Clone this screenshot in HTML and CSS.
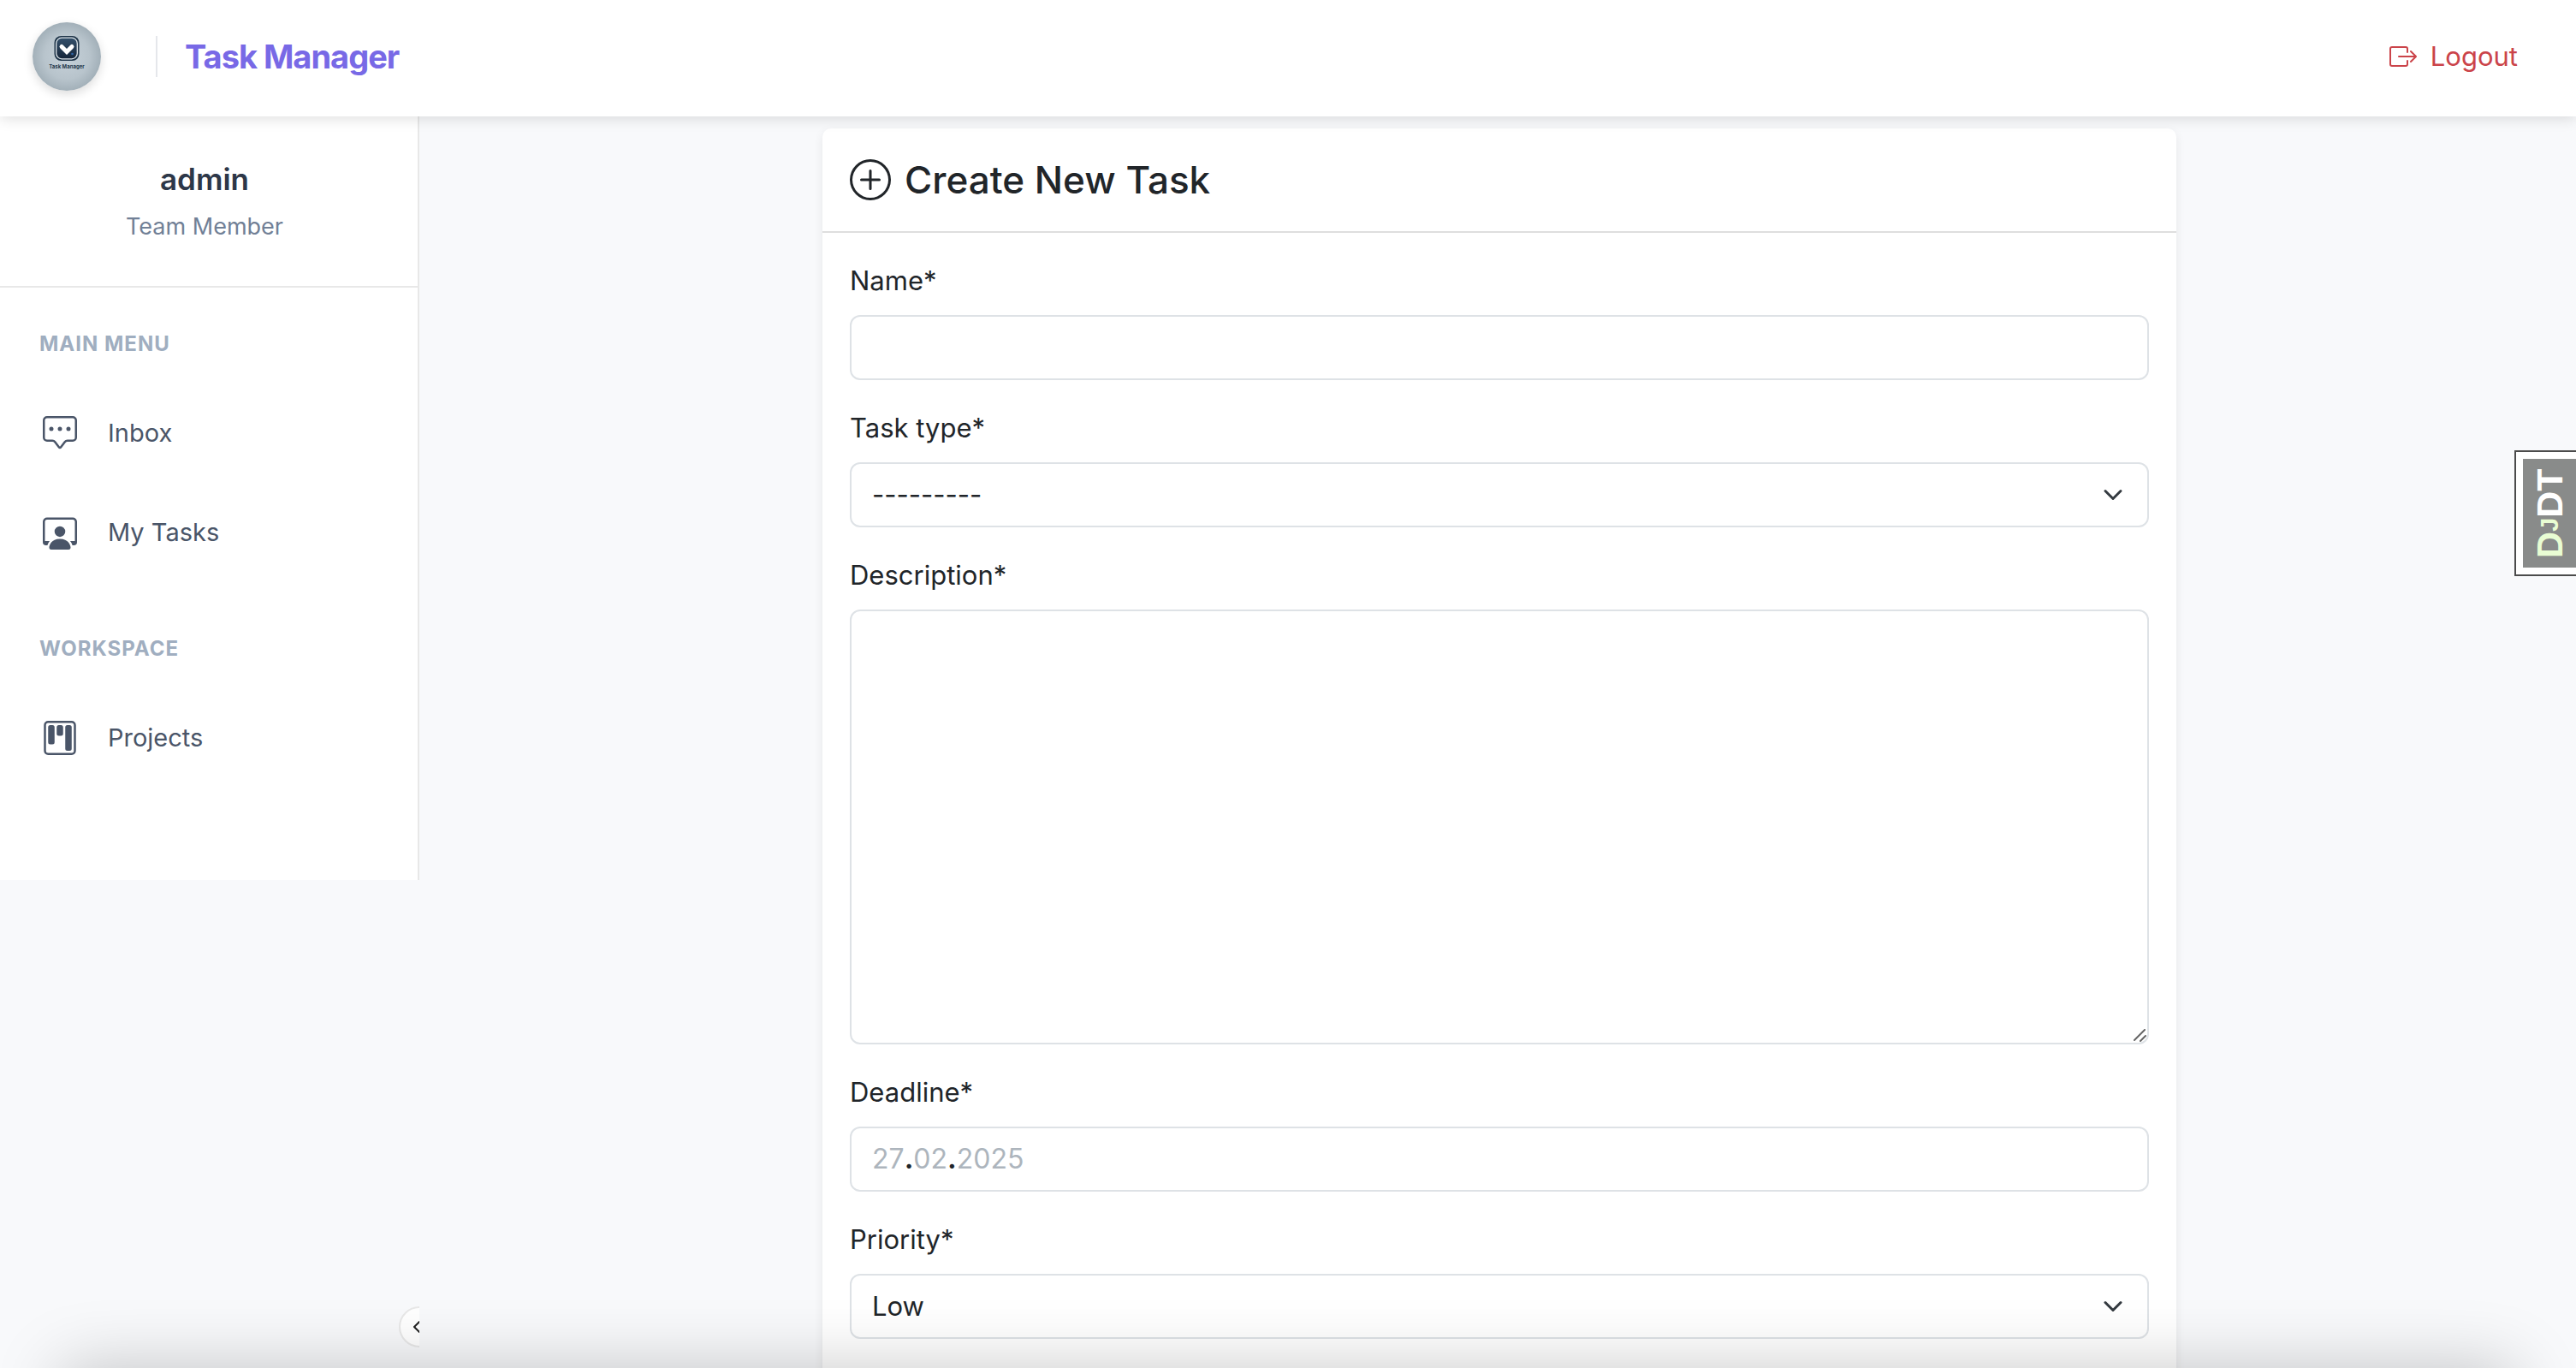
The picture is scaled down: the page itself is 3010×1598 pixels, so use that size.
FILE: index.html
```html
<!DOCTYPE html>
<html lang="en">
<head>
  <meta charset="utf-8">
  <title>Create New Task - Task Manager</title>
  <link rel="stylesheet" href="styles.css">
</head>
<body>
  <div class="app">
    <header class="topbar">
      <a class="logo" href="#" aria-label="Home">
        <svg viewBox="0 0 80 80" width="80" height="80" aria-hidden="true">
          <defs>
            <radialGradient id="disc" cx="50%" cy="50%" r="55%">
              <stop offset="0" stop-color="#c6d1d9"/>
              <stop offset="0.6" stop-color="#b8c4cc"/>
              <stop offset="1" stop-color="#9caab3"/>
            </radialGradient>
            <linearGradient id="tile" x1="0" y1="0" x2="0" y2="1">
              <stop offset="0" stop-color="#34506b"/>
              <stop offset="1" stop-color="#16263a"/>
            </linearGradient>
          </defs>
          <circle cx="40" cy="40" r="40" fill="url(#disc)"/>
          <rect x="25.5" y="16" width="29" height="29" rx="8" fill="#1f3549"/>
          <rect x="27.7" y="18.200" width="24.600" height="24.600" rx="6.500" fill="url(#tile)" stroke="#dfe6eb" stroke-width="1.300"/>
          <path d="M34 28.500l6 6 6-6" fill="none" stroke="#fff" stroke-width="5" stroke-linecap="round"/>
          <circle cx="46.500" cy="37" r="1.300" fill="#2f66a8"/>
          <text x="40" y="54" text-anchor="middle" class="logo-text">Task Manager</text>
        </svg>
      </a>
      <a class="brand" href="#">Task Manager</a>
      <a class="logout" href="#">
        <svg viewBox="0 0 16 16" width="32" height="32" fill="currentColor" aria-hidden="true">
          <path fill-rule="evenodd" d="M10 12.500a.5.5 0 0 1-.5.5h-8a.5.5 0 0 1-.5-.5v-9a.5.5 0 0 1 .5-.5h8a.5.5 0 0 1 .5.5v2a.5.5 0 0 0 1 0v-2A1.500 1.500 0 0 0 9.500 2h-8A1.500 1.500 0 0 0 0 3.500v9A1.500 1.500 0 0 0 1.500 14h8a1.500 1.500 0 0 0 1.500-1.500v-2a.5.5 0 0 0-1 0z"/>
          <path fill-rule="evenodd" d="M15.854 8.354a.5.5 0 0 0 0-.708l-3-3a.5.5 0 0 0-.708.708L14.293 7.500H5.500a.5.5 0 0 0 0 1h8.793l-2.147 2.146a.5.5 0 0 0 .708.708z"/>
        </svg>
        Logout
      </a>
    </header>

    <aside class="sidebar">
      <div class="profile">
        <p class="profile-name">admin</p>
        <p class="profile-role">Team Member</p>
      </div>
      <nav class="menu">
        <section>
          <h2 class="menu-title">Main Menu</h2>
          <ul class="menu-list">
            <li><a class="menu-link" href="#">
              <svg viewBox="0 0 16 16" width="40" height="40" fill="currentColor" aria-hidden="true">
                <path d="M14 1a1 1 0 0 1 1 1v8a1 1 0 0 1-1 1h-2.500a2 2 0 0 0-1.600.8L8 14.333 6.100 11.800a2 2 0 0 0-1.600-.8H2a1 1 0 0 1-1-1V2a1 1 0 0 1 1-1zM2 0a2 2 0 0 0-2 2v8a2 2 0 0 0 2 2h2.500a1 1 0 0 1 .8.4l1.900 2.533a1 1 0 0 0 1.600 0l1.900-2.533a1 1 0 0 1 .8-.4H14a2 2 0 0 0 2-2V2a2 2 0 0 0-2-2z"/>
                <path d="M5 6a1 1 0 1 1-2 0 1 1 0 0 1 2 0m4 0a1 1 0 1 1-2 0 1 1 0 0 1 2 0m4 0a1 1 0 1 1-2 0 1 1 0 0 1 2 0"/>
              </svg>
              Inbox</a></li>
            <li><a class="menu-link" href="#">
              <svg viewBox="0 0 16 16" width="40" height="40" fill="currentColor" aria-hidden="true">
                <path d="M4 16s-1 0-1-1 1-4 5-4 5 3 5 4-1 1-1 1zm4-5.950a2.500 2.500 0 1 0 0-5 2.500 2.500 0 0 0 0 5"/>
                <path d="M2 1a2 2 0 0 0-2 2v9.500A1.500 1.500 0 0 0 1.500 14h.653a5.400 5.400 0 0 1 1.066-2H1V3a1 1 0 0 1 1-1h12a1 1 0 0 1 1 1v9h-2.219c.554.654.89 1.373 1.066 2h.653a1.500 1.500 0 0 0 1.500-1.500V3a2 2 0 0 0-2-2z"/>
              </svg>
              My Tasks</a></li>
          </ul>
        </section>
        <section>
          <h2 class="menu-title">Workspace</h2>
          <ul class="menu-list">
            <li><a class="menu-link" href="#">
              <svg viewBox="0 0 16 16" width="40" height="40" fill="currentColor" aria-hidden="true">
                <path d="M13.500 1a1 1 0 0 1 1 1v12a1 1 0 0 1-1 1h-11a1 1 0 0 1-1-1V2a1 1 0 0 1 1-1zm-11-1a2 2 0 0 0-2 2v12a2 2 0 0 0 2 2h11a2 2 0 0 0 2-2V2a2 2 0 0 0-2-2z"/>
                <path d="M6.500 3a1 1 0 0 1 1-1h1a1 1 0 0 1 1 1v3a1 1 0 0 1-1 1h-1a1 1 0 0 1-1-1zm-4 0a1 1 0 0 1 1-1h1a1 1 0 0 1 1 1v7a1 1 0 0 1-1 1h-1a1 1 0 0 1-1-1zm8 0a1 1 0 0 1 1-1h1a1 1 0 0 1 1 1v10a1 1 0 0 1-1 1h-1a1 1 0 0 1-1-1z"/>
              </svg>
              Projects</a></li>
          </ul>
        </section>
      </nav>
    </aside>

    <main class="content">
      <form class="card">
        <h1 class="card-header">
          <svg viewBox="0 0 16 16" width="48" height="48" fill="currentColor" aria-hidden="true">
            <path d="M8 15A7 7 0 1 1 8 1a7 7 0 0 1 0 14m0 1A8 8 0 1 0 8 0a8 8 0 0 0 0 16"/>
            <path d="M8 4a.5.5 0 0 1 .5.5v3h3a.5.5 0 0 1 0 1h-3v3a.5.5 0 0 1-1 0v-3h-3a.5.5 0 0 1 0-1h3v-3A.5.5 0 0 1 8 4"/>
          </svg>
          Create New Task
        </h1>
        <div class="card-body">
          <div class="field">
            <label for="name">Name*</label>
            <input class="control" id="name" type="text">
          </div>
          <div class="field">
            <label for="type">Task type*</label>
            <select class="control select" id="type"><option>---------</option></select>
          </div>
          <div class="field">
            <label for="description">Description*</label>
            <div class="stack">
              <textarea class="control textarea" id="description"></textarea>
              <svg class="grip" viewBox="0 0 16 16" width="16" height="16" fill="none" stroke="#666" stroke-width="2" stroke-linecap="round" aria-hidden="true">
                <path d="M1 13L13 1M8 14l6-6"/>
              </svg>
            </div>
          </div>
          <div class="field">
            <label for="deadline">Deadline*</label>
            <div class="stack">
              <input class="control" id="deadline" type="text" inputmode="numeric">
              <span class="date-hint" aria-hidden="true">27<b>.</b>02<b>.</b>2025</span>
            </div>
          </div>
          <div class="field">
            <label for="priority">Priority*</label>
            <select class="control select" id="priority"><option>Low</option></select>
          </div>
        </div>
      </form>
    </main>
  </div>

  <div class="toggle-clip">
    <button class="toggle" type="button" aria-label="Collapse sidebar">
      <svg viewBox="0 0 16 16" width="16" height="16" fill="none" stroke="#222" stroke-width="2" stroke-linecap="round" stroke-linejoin="round" aria-hidden="true">
        <path d="M8 2L2 8l6 6"/>
      </svg>
    </button>
  </div>
  <button class="debug-handle" type="button"><span class="debug-text"><span class="debug-dj">D<small>J</small></span>DT</span></button>
  <div class="bottom-shade"></div>
</body>
</html>
```
FILE: styles.css
```css
* {
  box-sizing: border-box;
}

body {
  margin: 0;
  background: #f8f9fb;
  color: #212529;
  font: 400 31px/48px Inter, "Liberation Sans", sans-serif;
}

a {
  color: inherit;
  text-decoration: none;
}

svg {
  display: block;
  flex: none;
}

.app {
  display: grid;
  grid-template: auto 1fr / 490px 1fr;
  height: 100vh;
  overflow: hidden;
}

/* Top bar */
.topbar {
  grid-column: 1 / -1;
  z-index: 1;
  display: flex;
  align-items: center;
  padding: 26px 68px 30px 38px;
  background: #fff;
  box-shadow: 0 2px 16px rgba(0, 0, 0, 0.14);
}

.logo {
  border-radius: 50%;
  box-shadow: 0 4px 12px rgba(0, 0, 0, 0.14);
}

.logo-text {
  font: 700 6px Inter, sans-serif;
  fill: #24384c;
}

.brand {
  margin-left: 64px;
  padding-left: 32px;
  border-left: 2px solid #e5e7eb;
  color: #7869e6;
  font-size: 38px;
  font-weight: 700;
  letter-spacing: -1px;
}

.logout {
  display: flex;
  align-items: center;
  gap: 16px;
  margin-left: auto;
  color: #cb444a;
}

/* Sidebar */
.sidebar {
  align-self: start;
  padding-bottom: 124px;
  background: #fff;
  border-right: 2px solid #e8e8e8;
}

.profile {
  display: grid;
  gap: 8px;
  padding: 46px 24px 48px 14px;
  border-bottom: 2px solid #e8e8e8;
  text-align: center;
}

.profile p {
  margin: 0;
}

.profile-name {
  color: #2d3748;
  font-size: 35px;
  line-height: 54px;
  font-weight: 600;
}

.profile-role {
  color: #718096;
  font-size: 27px;
  line-height: 42px;
}

.menu {
  display: grid;
  gap: 76px;
  padding-top: 48px;
}

.menu-title {
  margin: 0 0 44px;
  padding-left: 46px;
  color: #a0aec0;
  font-size: 24px;
  line-height: 36px;
  font-weight: 700;
  letter-spacing: 1px;
  text-transform: uppercase;
}

.menu-list {
  display: grid;
  gap: 32px;
  margin: 0;
  padding: 0;
  list-style: none;
}

.menu-link {
  display: flex;
  align-items: center;
  gap: 36px;
  padding: 18px 50px;
  color: #4a5568;
  font-size: 29px;
}

/* Form card */
.content {
  min-width: 0;
  padding: 14px 0 0 4px;
}

.card {
  max-width: 1582px;
  margin: 0 auto;
  background: #fff;
  border-radius: 10px;
  box-shadow: 0 4px 12px rgba(0, 0, 0, 0.08);
}

.card-header {
  display: flex;
  align-items: center;
  gap: 16px;
  margin: 0;
  padding: 30px 32px;
  border-bottom: 2px solid #dedede;
  font-size: 44px;
  line-height: 60px;
  font-weight: 500;
}

.card-body {
  display: grid;
  gap: 32px;
  padding: 32px 32px 64px;
}

.field {
  display: grid;
  gap: 16px;
}

.control {
  display: block;
  width: 100%;
  height: 76px;
  padding: 12px 24px;
  border: 2px solid #dee2e6;
  border-radius: 12px;
  background: #fff;
  color: inherit;
  font: inherit;
}

.select {
  appearance: none;
  background: #fff url("data:image/svg+xml,%3csvg xmlns='http://www.w3.org/2000/svg' viewBox='0 0 16 16'%3e%3cpath fill='none' stroke='%23343a40' stroke-linecap='round' stroke-linejoin='round' stroke-width='2' d='m2 5 6 6 6-6'/%3e%3c/svg%3e") no-repeat right 24px center / 32px 24px;
}

.textarea {
  height: 508px;
  resize: none;
}

.stack {
  position: relative;
}

.grip {
  position: absolute;
  right: 2px;
  bottom: 2px;
}

.date-hint {
  position: absolute;
  top: 14px;
  left: 26px;
  color: #adb5bd;
  font-size: 32px;
  pointer-events: none;
}

.date-hint b {
  color: #212529;
}

/* Floating controls */
.toggle-clip {
  position: fixed;
  left: 466px;
  bottom: 24px;
  width: 24px;
  overflow: hidden;
}

.toggle {
  display: block;
  width: 48px;
  height: 48px;
  padding: 0 0 0 14px;
  border: 2px solid #e8e8e8;
  border-radius: 50%;
  background: #fff;
}

.debug-handle {
  position: fixed;
  top: 526px;
  right: 0;
  padding: 8px 0 8px 8px;
  border: 2px solid #4b4b4b;
  border-right: 0;
  background: #fff;
  color: #fff;
  font: 700 43px/62px "Liberation Sans", Arial, sans-serif;
}

.debug-text {
  display: block;
  height: 127px;
  padding: 10px 0;
  background: #898b8a;
  writing-mode: vertical-rl;
  transform: rotate(180deg);
}

.debug-dj {
  color: #e9fdd3;
}

.debug-dj small {
  font-size: 29px;
}

.bottom-shade {
  position: fixed;
  top: 100%;
  left: 72px;
  right: 72px;
  height: 200px;
  box-shadow: 0 0 80px rgba(0, 0, 0, 0.22);
}
```
